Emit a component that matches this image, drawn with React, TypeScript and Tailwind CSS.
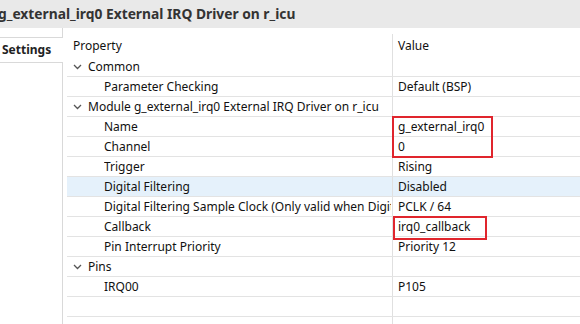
import React from "react";

type Row = {
  label: string;
  value?: string;
  level: 0 | 1;
  group?: boolean;
  selected?: boolean;
};

const rows: Row[] = [
  { label: "Common", level: 0, group: true },
  { label: "Parameter Checking", value: "Default (BSP)", level: 1 },
  { label: "Module g_external_irq0 External IRQ Driver on r_icu", level: 0, group: true },
  { label: "Name", value: "g_external_irq0", level: 1 },
  { label: "Channel", value: "0", level: 1 },
  { label: "Trigger", value: "Rising", level: 1 },
  { label: "Digital Filtering", value: "Disabled", level: 1, selected: true },
  { label: "Digital Filtering Sample Clock (Only valid when Digital Filtering is Enabled)", value: "PCLK / 64", level: 1 },
  { label: "Callback", value: "irq0_callback", level: 1 },
  { label: "Pin Interrupt Priority", value: "Priority 12", level: 1 },
  { label: "Pins", level: 0, group: true },
  { label: "IRQ00", value: "P105", level: 1 },
  { label: "", level: 1 },
  { label: "", level: 1 },
];

function Chevron() {
  return (
    <svg width="9" height="6" viewBox="0 0 9 6" className="mr-[6px] shrink-0">
      <path d="M1 1 L4.5 4.5 L8 1" fill="none" stroke="#555" strokeWidth="1.3" />
    </svg>
  );
}

export default function App() {
  return (
    <div
      className="w-[580px] h-[324px] overflow-hidden bg-white flex flex-col text-[12px] text-[#111]"
      style={{ fontFamily: '"Noto Sans", "Liberation Sans", sans-serif' }}
    >
      <div className="h-[28px] shrink-0 bg-[#e9e9e9] flex items-center -ml-[2px]">
        <span className="text-[13.8px] font-bold text-[#333] whitespace-nowrap">
          g_external_irq0 External IRQ Driver on r_icu
        </span>
      </div>

      <div className="flex flex-1 min-h-0">
        {/* tabs */}
        <div className="w-[63px] shrink-0 flex flex-col">
          <div className="h-[10px] border-r border-b border-[#d9d9d9]" />
          <div className="h-[25px] border-b border-[#d9d9d9] flex items-center pl-[2px] font-bold text-[#222] text-[12px]">
            Settings
          </div>
          <div className="flex-1 border-r border-[#d9d9d9]" />
        </div>

        {/* property table */}
        <div className="relative flex-1 pl-[4px] pt-[6px] overflow-hidden">
          <div className="grid grid-cols-[325px_1fr] h-[23px]">
            <div className="pl-[6px] flex items-center">Property</div>
            <div className="border-l border-[#e0e0e0] pl-[5px] flex items-center">Value</div>
          </div>
          {rows.map((r, i) => (
            <div
              key={i}
              className={
                "grid grid-cols-[325px_1fr] h-[20px] border-b border-[#e3e3e3] " +
                (r.selected ? "bg-[#e5f1fb]" : "")
              }
            >
              <div
                className={
                  "flex items-center overflow-hidden whitespace-nowrap pr-[1px] " +
                  (r.level === 0 ? "pl-[6px]" : "pl-[37px]")
                }
              >
                {r.group && <Chevron />}
                <span className="overflow-hidden">{r.label}</span>
              </div>
              <div className="border-l border-[#e0e0e0] pl-[5px] flex items-center whitespace-nowrap">
                {r.value}
              </div>
            </div>
          ))}
          <div className="h-[20px] grid grid-cols-[325px_1fr]">
            <div />
            <div className="border-l border-[#e0e0e0]" />
          </div>

          {/* annotation boxes */}
          <div className="absolute left-[329px] top-[88px] w-[101px] h-[42px] border-2 border-[#e0252d]" />
          <div className="absolute left-[330px] top-[188px] w-[94px] h-[24px] border-2 border-[#e0252d]" />
        </div>
      </div>
    </div>
  );
}
